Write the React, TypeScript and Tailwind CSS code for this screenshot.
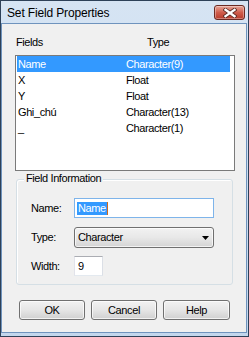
import React from "react";

const rows = [
  { name: "Name", type: "Character(9)" },
  { name: "X", type: "Float" },
  { name: "Y", type: "Float" },
  { name: "Ghi_chú", type: "Character(13)" },
  { name: "_", type: "Character(1)" },
];

function CloseButton() {
  return (
    <div className="mt-[4px] mr-[3px] w-[31px] h-[15px] rounded-[3px] border border-[#6b2a22] bg-gradient-to-b from-[#e6a598] via-[#cf5d4c] to-[#b83a2a] flex items-center justify-center shadow-[inset_0_0_0_1px_rgba(255,255,255,0.35)]">
      <svg width="14" height="10" viewBox="0 0 14 10">
        <path d="M2.5 1.8 L11.5 8.2 M11.5 1.8 L2.5 8.2" stroke="#5a2a24" strokeWidth="4" strokeLinecap="square" />
        <path d="M2.5 1.8 L11.5 8.2 M11.5 1.8 L2.5 8.2" stroke="#ffffff" strokeWidth="2.4" strokeLinecap="square" />
      </svg>
    </div>
  );
}

function Button({ label, w }: { label: string; w: string }) {
  return (
    <div
      className={`${w} h-[20px] rounded-[3px] border border-[#707070] bg-gradient-to-b from-[#f2f2f2] via-[#e6e6e6] to-[#d0d0d0] shadow-[inset_0_0_0_1px_rgba(255,255,255,0.7)] flex items-center justify-center text-[11px] text-black`}
    >
      {label}
    </div>
  );
}

export default function App() {
  return (
    <div className="w-[249px] h-[337px] border border-[#2e4158] bg-gradient-to-b from-[#d6e4f3] to-[#c3d7ed] flex flex-col font-['Liberation_Sans',Arial,sans-serif] tracking-[-0.4px] text-black select-none">
      {/* Title bar */}
      <div className="h-[22px] flex justify-between items-start shrink-0">
        <div className="pl-[6px] pt-[3px] leading-[18px] text-[12px] tracking-[-0.15px] text-black">
          Set Field Properties
        </div>
        <CloseButton />
      </div>

      {/* Client area */}
      <div className="flex-1 mr-[1px] mb-[3px] border border-[#6f93bd] bg-[#f0f0f0] flex flex-col text-[11px]">
        {/* headers */}
        <div className="mt-[12px] h-[13px] leading-[13px] pl-[14px] flex">
          <span className="w-[131px]">Fields</span>
          <span>Type</span>
        </div>

        {/* list box */}
        <div className="mt-[6px] ml-[13px] w-[220px] h-[116px] border border-[#7a7a7a] bg-white flex flex-col">
          {rows.map((r, i) => (
            <div
              key={i}
              className={`ml-[1px] w-[213px] h-[16px] leading-[16px] flex ${i === 0 ? "bg-[#3399ff] text-white" : "text-black"}`}
            >
              <span className="pl-[1px] w-[109px]">{r.name}</span>
              <span>{r.type}</span>
            </div>
          ))}
        </div>

        {/* group box */}
        <div className="relative mt-[8px] ml-[14px] w-[217px] h-[106px] rounded-[3px] border border-[#d5dfe5] shadow-[inset_1px_1px_0_#ffffff] pt-[18px] pl-[14px] flex flex-col">
          <span className="absolute left-[7px] top-[-8px] px-[2px] bg-[#f0f0f0] leading-[13px]">
            Field Information
          </span>

          {/* Name row */}
          <div className="flex items-center h-[20px]">
            <span className="w-[43px]">Name:</span>
            <div className="w-[140px] h-[20px] border border-[#7eb4ea] bg-white flex items-center pl-[2px]">
              <span className="bg-[#3399ff] text-white leading-[13px] h-[13px] pl-[1px] pr-[1px]">Name</span>
              <span className="w-px h-[13px] bg-[#d06a1c]" />
            </div>
          </div>

          {/* Type row */}
          <div className="flex items-center h-[21px] mt-[9px]">
            <span className="w-[43px]">Type:</span>
            <div className="w-[140px] h-[21px] rounded-[3px] border border-[#707070] bg-gradient-to-b from-[#f2f2f2] via-[#e8e8e8] to-[#d4d4d4] shadow-[inset_0_0_0_1px_rgba(255,255,255,0.7)] flex items-center justify-between pl-[3px] pr-[4px]">
              <span>Character</span>
              <svg width="7" height="4" viewBox="0 0 7 4">
                <path d="M0 0 H7 L3.5 4 Z" fill="#000000" />
              </svg>
            </div>
          </div>

          {/* Width row */}
          <div className="flex items-center h-[20px] mt-[8px]">
            <span className="w-[43px]">Width:</span>
            <div className="w-[29px] h-[20px] border border-[#abadb3] border-l-[#e2e3ea] border-r-[#dbdfe6] border-b-[#e3e9ef] bg-white flex items-center pl-[3px]">
              9
            </div>
          </div>
        </div>

        {/* buttons */}
        <div className="mt-[15px] pl-[17px] flex gap-[6px]">
          <Button label="OK" w="w-[66px]" />
          <Button label="Cancel" w="w-[66px]" />
          <Button label="Help" w="w-[67px]" />
        </div>
      </div>
    </div>
  );
}
